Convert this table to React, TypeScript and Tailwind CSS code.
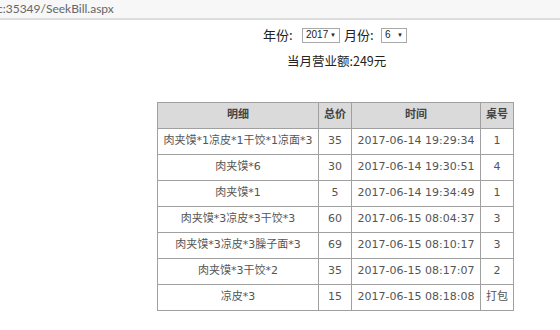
import React from "react";

const rows = [
  { detail: "肉夹馍*1凉皮*1干饺*1凉面*3", price: "35", time: "2017-06-14 19:29:34", table: "1" },
  { detail: "肉夹馍*6", price: "30", time: "2017-06-14 19:30:51", table: "4" },
  { detail: "肉夹馍*1", price: "5", time: "2017-06-14 19:34:49", table: "1" },
  { detail: "肉夹馍*3凉皮*3干饺*3", price: "60", time: "2017-06-15 08:04:37", table: "3" },
  { detail: "肉夹馍*3凉皮*3臊子面*3", price: "69", time: "2017-06-15 08:10:17", table: "3" },
  { detail: "肉夹馍*3干饺*2", price: "35", time: "2017-06-15 08:17:07", table: "2" },
  { detail: "凉皮*3", price: "15", time: "2017-06-15 08:18:08", table: "打包" },
];

const FakeSelect = ({ value, width }: { value: string; width: string }) => (
  <span
    className={`inline-flex h-[15px] items-center justify-between border border-[#a9a9a9] bg-white pl-[3px] pr-[3px] text-[10px] leading-none text-[#222] ${width}`}
    style={{ fontFamily: '"Liberation Sans", Arial, sans-serif' }}
  >
    <span>{value}</span>
    <span className="text-[6px]">▼</span>
  </span>
);

const App = () => {
  return (
    <div
      className="h-[330px] w-[560px] overflow-hidden bg-white text-[#333]"
      style={{ fontFamily: '"DejaVu Sans", "Noto Sans CJK SC", sans-serif' }}
    >
      <div className="flex h-[20px] items-center border-b-2 border-[#dcdcdc] bg-[#f7f7f7]">
        <span
          className="ml-[-3px] text-[12px] text-[#666]"
          style={{ fontFamily: 'Lato, "Open Sans", sans-serif' }}
        >
          c:35349/SeekBill.aspx
        </span>
      </div>

      <div className="ml-[157px] w-[357px]">
        <div
          className="mt-[7px] flex h-[16px] items-center pl-[106px] text-[13px] text-[#222]"
          style={{ fontFamily: '"Noto Sans CJK SC", sans-serif' }}
        >
          <span className="w-[39px]">年份:</span>
          <FakeSelect value="2017" width="w-[38px]" />
          <span className="ml-[4px] w-[37px]">月份:</span>
          <FakeSelect value="6" width="w-[26px]" />
        </div>

        <div
          className="mt-[9px] pl-[130px] text-[12.5px] text-[#222]"
          style={{ fontFamily: '"Noto Sans CJK SC", sans-serif' }}
        >
          当月营业额:249元
        </div>

        <table className="mt-[31px] w-[357px] border-collapse border border-[#a0a0a0] text-center text-[11px] text-[#555]">
          <thead>
            <tr className="h-[26px] bg-[#dadada] font-bold text-[#444]">
              <th className="w-[161px] border border-[#a0a0a0]">明细</th>
              <th className="w-[33px] border border-[#a0a0a0]">总价</th>
              <th className="w-[129px] border border-[#a0a0a0]">时间</th>
              <th className="border border-[#a0a0a0]">桌号</th>
            </tr>
          </thead>
          <tbody>
            {rows.map((row, i) => (
              <tr key={i} className="h-[26px]">
                <td className="whitespace-nowrap border border-[#a0a0a0]">{row.detail}</td>
                <td className="border border-[#a0a0a0]">{row.price}</td>
                <td className="whitespace-nowrap border border-[#a0a0a0]">{row.time}</td>
                <td className="border border-[#a0a0a0]">{row.table}</td>
              </tr>
            ))}
          </tbody>
        </table>
      </div>
    </div>
  );
};

export default App;
